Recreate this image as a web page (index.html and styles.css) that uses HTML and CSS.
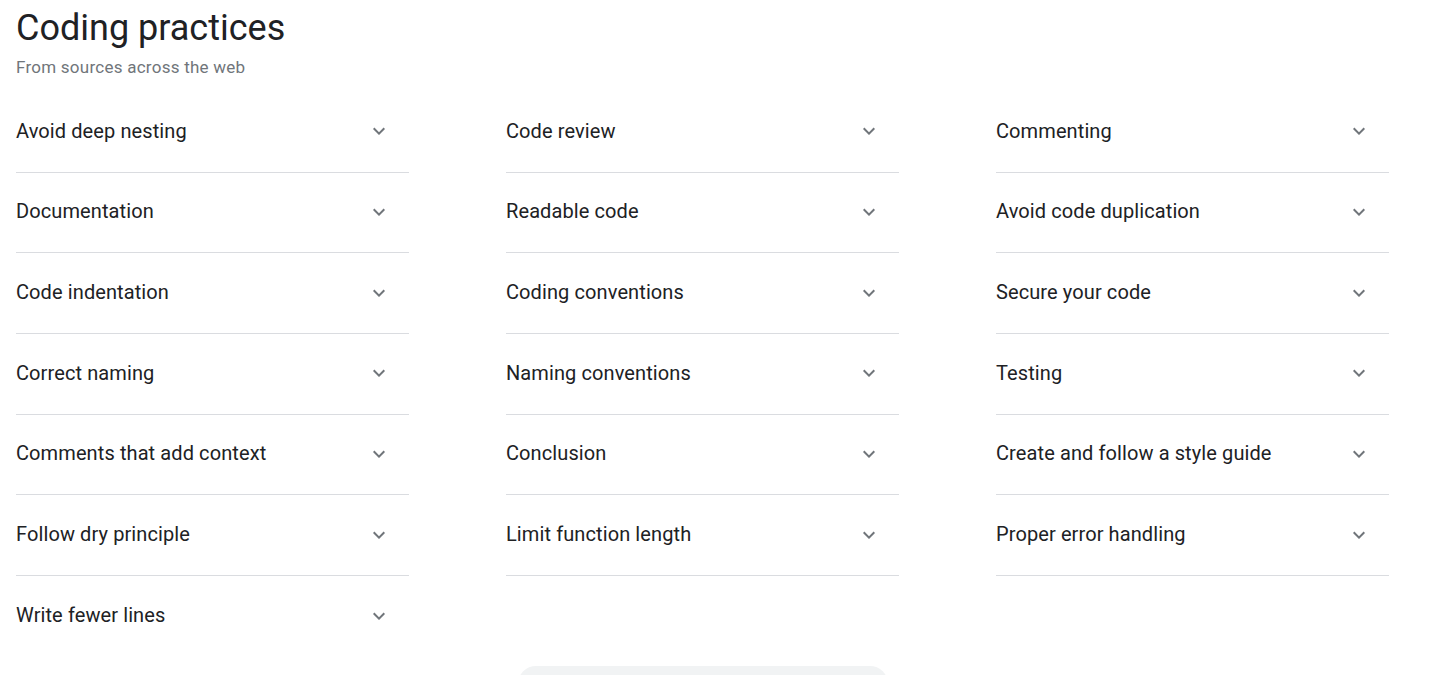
FILE: index.html
```html
<!DOCTYPE html>
<html>
<head>
<meta charset="utf-8">
<link rel="stylesheet" href="styles.css">
</head>
<body>
<div class="page">
  <h1 class="title">Coding practices</h1>
  <div class="subtitle">From sources across the web</div>
  <div class="grid">
    <div class="item"><span>Avoid deep nesting</span><svg class="chev" viewBox="0 0 24 24"><path d="M7.41 8.59L12 13.17l4.59-4.58L18 10l-6 6-6-6 1.41-1.41z"/></svg></div>
    <div class="item"><span>Code review</span><svg class="chev" viewBox="0 0 24 24"><path d="M7.41 8.59L12 13.17l4.59-4.58L18 10l-6 6-6-6 1.41-1.41z"/></svg></div>
    <div class="item"><span>Commenting</span><svg class="chev" viewBox="0 0 24 24"><path d="M7.41 8.59L12 13.17l4.59-4.58L18 10l-6 6-6-6 1.41-1.41z"/></svg></div>
    <div class="item"><span>Documentation</span><svg class="chev" viewBox="0 0 24 24"><path d="M7.41 8.59L12 13.17l4.59-4.58L18 10l-6 6-6-6 1.41-1.41z"/></svg></div>
    <div class="item"><span>Readable code</span><svg class="chev" viewBox="0 0 24 24"><path d="M7.41 8.59L12 13.17l4.59-4.58L18 10l-6 6-6-6 1.41-1.41z"/></svg></div>
    <div class="item"><span>Avoid code duplication</span><svg class="chev" viewBox="0 0 24 24"><path d="M7.41 8.59L12 13.17l4.59-4.58L18 10l-6 6-6-6 1.41-1.41z"/></svg></div>
    <div class="item"><span>Code indentation</span><svg class="chev" viewBox="0 0 24 24"><path d="M7.41 8.59L12 13.17l4.59-4.58L18 10l-6 6-6-6 1.41-1.41z"/></svg></div>
    <div class="item"><span>Coding conventions</span><svg class="chev" viewBox="0 0 24 24"><path d="M7.41 8.59L12 13.17l4.59-4.58L18 10l-6 6-6-6 1.41-1.41z"/></svg></div>
    <div class="item"><span>Secure your code</span><svg class="chev" viewBox="0 0 24 24"><path d="M7.41 8.59L12 13.17l4.59-4.58L18 10l-6 6-6-6 1.41-1.41z"/></svg></div>
    <div class="item"><span>Correct naming</span><svg class="chev" viewBox="0 0 24 24"><path d="M7.41 8.59L12 13.17l4.59-4.58L18 10l-6 6-6-6 1.41-1.41z"/></svg></div>
    <div class="item"><span>Naming conventions</span><svg class="chev" viewBox="0 0 24 24"><path d="M7.41 8.59L12 13.17l4.59-4.58L18 10l-6 6-6-6 1.41-1.41z"/></svg></div>
    <div class="item"><span>Testing</span><svg class="chev" viewBox="0 0 24 24"><path d="M7.41 8.59L12 13.17l4.59-4.58L18 10l-6 6-6-6 1.41-1.41z"/></svg></div>
    <div class="item"><span>Comments that add context</span><svg class="chev" viewBox="0 0 24 24"><path d="M7.41 8.59L12 13.17l4.59-4.58L18 10l-6 6-6-6 1.41-1.41z"/></svg></div>
    <div class="item"><span>Conclusion</span><svg class="chev" viewBox="0 0 24 24"><path d="M7.41 8.59L12 13.17l4.59-4.58L18 10l-6 6-6-6 1.41-1.41z"/></svg></div>
    <div class="item"><span>Create and follow a style guide</span><svg class="chev" viewBox="0 0 24 24"><path d="M7.41 8.59L12 13.17l4.59-4.58L18 10l-6 6-6-6 1.41-1.41z"/></svg></div>
    <div class="item"><span>Follow dry principle</span><svg class="chev" viewBox="0 0 24 24"><path d="M7.41 8.59L12 13.17l4.59-4.58L18 10l-6 6-6-6 1.41-1.41z"/></svg></div>
    <div class="item"><span>Limit function length</span><svg class="chev" viewBox="0 0 24 24"><path d="M7.41 8.59L12 13.17l4.59-4.58L18 10l-6 6-6-6 1.41-1.41z"/></svg></div>
    <div class="item"><span>Proper error handling</span><svg class="chev" viewBox="0 0 24 24"><path d="M7.41 8.59L12 13.17l4.59-4.58L18 10l-6 6-6-6 1.41-1.41z"/></svg></div>
    <div class="item last"><span>Write fewer lines</span><svg class="chev" viewBox="0 0 24 24"><path d="M7.41 8.59L12 13.17l4.59-4.58L18 10l-6 6-6-6 1.41-1.41z"/></svg></div>
  </div>
  <div class="more-wrap"><div class="more"></div></div>
</div>
</body>
</html>
```
FILE: styles.css
```css
html, body {
  margin: 0;
  padding: 0;
  background: #fff;
}
body {
  font-family: Roboto, "Open Sans", Arial, sans-serif;
  color: #202124;
}
.page {
  padding: 0 40px 0 16px;
}
.title {
  margin: 0;
  padding-top: 6px;
  font-size: 36px;
  font-weight: 400;
  line-height: 44px;
  color: #202124;
}
.subtitle {
  font-size: 17px;
  letter-spacing: 0.25px;
  line-height: 20px;
  color: #70757a;
  margin-top: 7px;
}
.grid {
  margin-top: 15px;
  display: grid;
  grid-template-columns: 393px 393px 393px;
  column-gap: 97px;
}
.item {
  height: 80.67px;
  box-sizing: border-box;
  border-bottom: 1px solid #dadce0;
  display: flex;
  align-items: center;
  justify-content: space-between;
  font-size: 20px;
  letter-spacing: 0.1px;
}
.item span {
  line-height: 26px;
  margin-top: -2px;
}
.item.last {
  border-bottom: none;
}
.chev {
  width: 24px;
  height: 24px;
  fill: #70757a;
  margin-right: 18px;
  margin-top: -1px;
  flex-shrink: 0;
}
.more-wrap {
  display: flex;
  justify-content: center;
  width: 1373px;
  padding-top: 9px;
}
.more {
  width: 370px;
  height: 36px;
  border-radius: 18px;
  background: #f1f3f4;
}
```
